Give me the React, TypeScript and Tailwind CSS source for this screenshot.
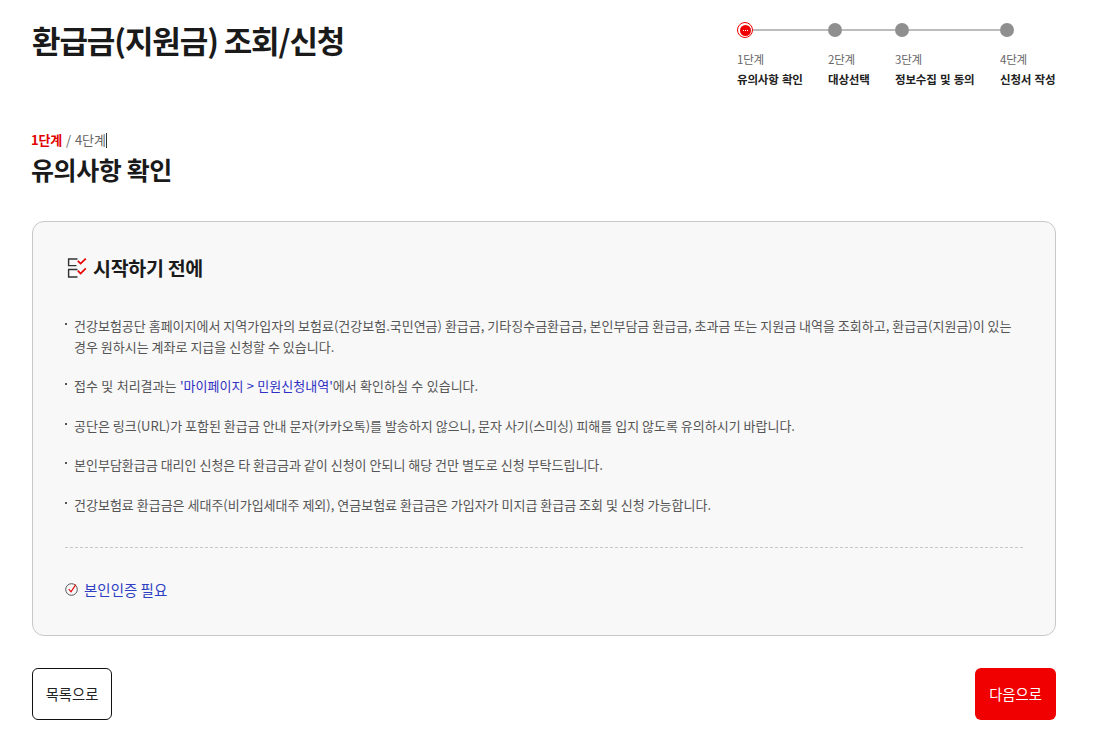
const steps = [
  { step: "1단계", label: "유의사항 확인", width: "w-[91px]", active: true },
  { step: "2단계", label: "대상선택", width: "w-[67px]" },
  { step: "3단계", label: "정보수집 및 동의", width: "w-[105px]" },
  { step: "4단계", label: "신청서 작성", width: "w-[56px]", last: true },
]

const notices = [
  <>
    건강보험공단 홈페이지에서 지역가입자의 보험료(건강보험.국민연금) 환급금, 기타징수금환급금, 본인부담금 환급금, 초과금 또는 지원금 내역을 조회하고, 환급금(지원금)이 있는 경우 원하시는 계좌로 지급을 신청할 수 있습니다.
  </>,
  <span className="[word-spacing:0.5px]">
    접수 및 처리결과는 <span className="text-[#2f2fc4]">'마이페이지 &gt; 민원신청내역'</span>에서 확인하실 수 있습니다.
  </span>,
  <>공단은 링크(URL)가 포함된 환급금 안내 문자(카카오톡)를 발송하지 않으니, 문자 사기(스미싱) 피해를 입지 않도록 유의하시기 바랍니다.</>,
  <>본인부담환급금 대리인 신청은 타 환급금과 같이 신청이 안되니 해당 건만 별도로 신청 부탁드립니다.</>,
  <>건강보험료 환급금은 세대주(비가입세대주 제외), 연금보험료 환급금은 가입자가 미지급 환급금 조회 및 신청 가능합니다.</>,
]

function ChecklistIcon() {
  return (
    <svg width="22" height="22" viewBox="0 0 22 22" fill="none" className="shrink-0">
      <path d="M12.5 2H3.6V8.6H11.5M12.5 12.5H3.6V20H12.5" stroke="#333" strokeWidth="1.4" />
      <path d="M12.8 3.8L15.6 6.6L20.8 1.6M12.8 13.6L15.6 16.6L20.8 11.4" stroke="#e60000" strokeWidth="1.7" />
    </svg>
  )
}

function CheckCircleIcon() {
  return (
    <svg width="14" height="14" viewBox="0 0 14 14" fill="none" className="shrink-0">
      <circle cx="6.5" cy="7.5" r="5.8" stroke="#555" strokeWidth="1" />
      <path d="M3.8 7.2L6 9.8L10.8 2.6" stroke="#e60000" strokeWidth="1.1" />
    </svg>
  )
}

export default function App() {
  return (
    <div className="min-h-[755px] bg-white pr-[38px] pb-[35px] pl-8 font-['Noto_Sans_CJK_KR','Noto_Sans',sans-serif] text-[#111]">
      {/* header */}
      <div className="flex h-[129px] items-start justify-between">
        <h1 className="mt-4 text-[31px] leading-[48px] font-bold tracking-[-1.1px] text-[#1a1a1a]">
          환급금(지원금) 조회/신청
        </h1>
        <ol className="mt-[22px] flex">
          {steps.map((s) => (
            <li key={s.step} className={s.width}>
              <div className="flex h-4 items-center">
                {s.active ? (
                  <span className="flex h-4 w-4 shrink-0 items-center justify-center rounded-full border border-[#f00000] bg-white">
                    <span className="flex h-[11px] w-[11px] items-center justify-center gap-px rounded-full bg-[#f00000]">
                      <span className="h-px w-px bg-white" />
                      <span className="h-px w-px bg-white" />
                      <span className="h-px w-px bg-white" />
                    </span>
                  </span>
                ) : (
                  <span className="h-[14px] w-[14px] shrink-0 rounded-full bg-[#8f8f8f]" />
                )}
                {!s.last && <span className="h-[2px] flex-1 bg-[#bcbcbc]" />}
              </div>
              <div className="mt-[13px] text-[11.5px] leading-[16px] tracking-[-0.2px] text-[#666]">{s.step}</div>
              <div className="mt-[3px] text-[11.5px] leading-[18px] font-bold tracking-[-0.2px] whitespace-nowrap text-[#222] [word-spacing:1px]">
                {s.label}
              </div>
            </li>
          ))}
        </ol>
      </div>

      {/* page step */}
      <div className="-ml-px flex h-[22px] items-center text-[13px] tracking-[-0.2px]">
        <b className="font-bold text-[#e00000]">1단계</b>
        <span className="ml-1 text-[#666] [word-spacing:1.5px]">/ 4단계</span>
        <span className="h-[15px] w-px bg-[#333]" />
      </div>
      <h2 className="mt-px -ml-px text-[25px] leading-[34px] font-bold tracking-[-0.4px] text-[#1a1a1a]">유의사항 확인</h2>

      {/* notice card */}
      <section className="mt-[35px] h-[415px] rounded-xl border border-[#c8c8c8] bg-[#f8f8f8] px-8 pt-[33px]">
        <div className="flex h-[26px] items-center gap-[6px]">
          <ChecklistIcon />
          <h3 className="text-[19.5px] leading-[26px] font-bold tracking-[-0.3px] text-[#1a1a1a]">시작하기 전에</h3>
        </div>
        <ul className="mt-[33.6px] flex flex-col gap-[18.5px]">
          {notices.map((n, i) => (
            <li key={i} className="relative pl-[9px] text-[13px] leading-[21px] text-[#555]">
              <span className="absolute top-[8px] left-0 h-[2px] w-[2px] bg-[#555]" />
              {n}
            </li>
          ))}
        </ul>
        <div className="mt-[32.4px] border-t border-dashed border-[#c8c8c8]" />
        <div className="mt-[31px] flex items-center gap-[5px] text-[14.5px] leading-[21px] text-[#2f3fc4]">
          <CheckCircleIcon />
          본인인증 필요
        </div>
      </section>

      {/* buttons */}
      <div className="mt-8 flex items-center justify-between">
        <button className="h-[52px] w-20 rounded-md border border-[#111] bg-white text-[14.3px] text-[#222]">목록으로</button>
        <button className="h-[52px] w-[81px] rounded-md bg-[#f00000] text-[14.3px] text-white">다음으로</button>
      </div>
    </div>
  )
}
